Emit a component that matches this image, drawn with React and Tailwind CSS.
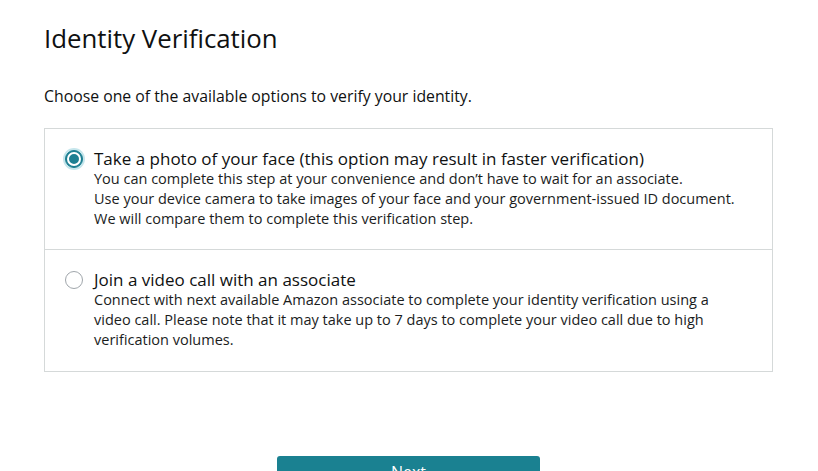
import React from "react";

const options = [
  {
    title: "Take a photo of your face (this option may result in faster verification)",
    lines: [
      "You can complete this step at your convenience and don’t have to wait for an associate.",
      "Use your device camera to take images of your face and your government-issued ID document.",
      "We will compare them to complete this verification step.",
    ],
    checked: true,
  },
  {
    title: "Join a video call with an associate",
    lines: [
      "Connect with next available Amazon associate to complete your identity verification using a",
      "video call. Please note that it may take up to 7 days to complete your video call due to high",
      "verification volumes.",
    ],
    checked: false,
  },
];

const Radio = ({ checked }) =>
  checked ? (
    <div className="w-[18px] h-[18px] rounded-full bg-[#1d7f92] border border-[#1d7f92] flex items-center justify-center shadow-[0_0_0_2px_#c6e6ec]">
      <div className="w-[14px] h-[14px] rounded-full border-[2.5px] border-white bg-[#1d7f92]" />
    </div>
  ) : (
    <div className="w-[18px] h-[18px] rounded-full border border-[#a0a6ab] bg-white" />
  );

const App = () => {
  return (
    <div className="w-[818px] h-[471px] overflow-hidden bg-white text-[#0f1111] font-['Open_Sans',sans-serif]">
      <div className="pl-[44px] pr-[45px] pt-[21px]">
        <h1 className="text-[25.8px] leading-[34px] font-normal">Identity Verification</h1>
        <p className="mt-[30px] text-[15.8px] leading-[22px]">
          Choose one of the available options to verify your identity.
        </p>

        <div className="mt-[21px] border border-[#d5d9d9]">
          {options.map((o, i) => (
            <div
              key={i}
              className={`flex gap-[11px] pl-[20px] pr-4 pt-[20px] h-[121px] ${i === 0 ? "border-b border-[#d5d9d9]" : ""}`}
            >
              <div className="pt-[1px]">
                <Radio checked={o.checked} />
              </div>
              <div>
                <div className="text-[17px] leading-[20px]">{o.title}</div>
                {o.lines.map((l, j) => (
                  <div key={j} className="text-[14.5px] leading-[20px] text-[#1b1d1d]">
                    {l}
                  </div>
                ))}
              </div>
            </div>
          ))}
        </div>

        <div className="mt-[84px] flex justify-center">
          <div
            role="button"
            className="w-[263px] h-[40px] rounded-[3px] bg-[#1a8191] text-white text-[16px] pt-[5px] leading-[22px] text-center"
          >
            Next
          </div>
        </div>
      </div>
    </div>
  );
};

export default App;
